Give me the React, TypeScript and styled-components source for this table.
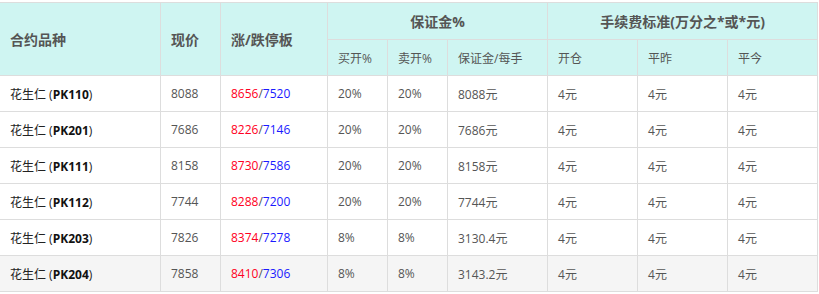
import styled, { createGlobalStyle } from 'styled-components'
import { FC } from 'react'

interface Row {
  code: string
  price: number
  up: number
  down: number
  buy: string
  sell: string
  margin: string
  hover?: boolean
}

const ROWS: Row[] = [
  { code: 'PK110', price: 8088, up: 8656, down: 7520, buy: '20%', sell: '20%', margin: '8088元' },
  { code: 'PK201', price: 7686, up: 8226, down: 7146, buy: '20%', sell: '20%', margin: '7686元' },
  { code: 'PK111', price: 8158, up: 8730, down: 7586, buy: '20%', sell: '20%', margin: '8158元' },
  { code: 'PK112', price: 7744, up: 8288, down: 7200, buy: '20%', sell: '20%', margin: '7744元' },
  { code: 'PK203', price: 7826, up: 8374, down: 7278, buy: '8%', sell: '8%', margin: '3130.4元' },
  { code: 'PK204', price: 7858, up: 8410, down: 7306, buy: '8%', sell: '8%', margin: '3143.2元', hover: true },
]

const GlobalStyle = createGlobalStyle`
  body {
    margin: 0;
    background: #fff;
    font-family: "Open Sans", "Noto Sans CJK SC", sans-serif;
    overflow: hidden;
  }
`

const App: FC = () => (
  <>
    <GlobalStyle />
    <Wrap>
      <Table>
        <colgroup>
          <col style={{ width: 161 }} />
          <col style={{ width: 60 }} />
          <col style={{ width: 107 }} />
          <col style={{ width: 60 }} />
          <col style={{ width: 60 }} />
          <col style={{ width: 100 }} />
          <col style={{ width: 90 }} />
          <col style={{ width: 90 }} />
          <col style={{ width: 90 }} />
        </colgroup>
        <thead>
          <tr>
            <HeadCell rowSpan={2}>合约品种</HeadCell>
            <HeadCell rowSpan={2}>现价</HeadCell>
            <HeadCell rowSpan={2}>涨/跌停板</HeadCell>
            <HeadCell colSpan={3} $center>
              保证金%
            </HeadCell>
            <HeadCell colSpan={3} $center>
              手续费标准(万分之*或*元)
            </HeadCell>
          </tr>
          <tr>
            <SubCell>买开%</SubCell>
            <SubCell>卖开%</SubCell>
            <SubCell>保证金/每手</SubCell>
            <SubCell>开仓</SubCell>
            <SubCell>平昨</SubCell>
            <SubCell>平今</SubCell>
          </tr>
        </thead>
        <tbody>
          {ROWS.map((r) => (
            <BodyRow key={r.code} $hover={r.hover}>
              <NameCell>
                花生仁 (<Code>{r.code}</Code>)
              </NameCell>
              <Cell>{r.price}</Cell>
              <Cell>
                <Up>{r.up}</Up>/<Down>{r.down}</Down>
              </Cell>
              <Cell>{r.buy}</Cell>
              <Cell>{r.sell}</Cell>
              <Cell>{r.margin}</Cell>
              <Cell>4元</Cell>
              <Cell>4元</Cell>
              <Cell>4元</Cell>
            </BodyRow>
          ))}
        </tbody>
      </Table>
    </Wrap>
  </>
)

const Wrap = styled.div`
  padding-top: 2px;
  margin-left: -1px;
`
const Table = styled.table`
  border-collapse: collapse;
  table-layout: fixed;
  width: 819px;
`
const HeadCell = styled.th<{ $center?: boolean }>`
  height: 36px;
  padding: 0 10px;
  border: 1px solid #ddd;
  background: #cff5f2;
  color: #555;
  font-size: 14px;
  font-weight: bold;
  text-align: ${(p) => (p.$center ? 'center' : 'left')};
  vertical-align: middle;
  white-space: nowrap;
`
const SubCell = styled.th`
  height: 35px;
  padding: 0 10px;
  border: 1px solid #ddd;
  background: #cff5f2;
  color: #555;
  font-size: 12px;
  font-weight: normal;
  text-align: left;
`
const BodyRow = styled.tr<{ $hover?: boolean }>`
  background: ${(p) => (p.$hover ? '#f5f5f5' : '#fff')};
`
const Cell = styled.td`
  height: 35px;
  padding: 0 10px;
  border: 1px solid #ddd;
  color: #555;
  font-size: 12px;
  white-space: nowrap;
`
const NameCell = styled(Cell)`
  color: #222;
`
const Code = styled.b`
  color: #111;
`
const Up = styled.span`
  color: #ff0022;
`
const Down = styled.span`
  color: #1a1aff;
`

export default App
